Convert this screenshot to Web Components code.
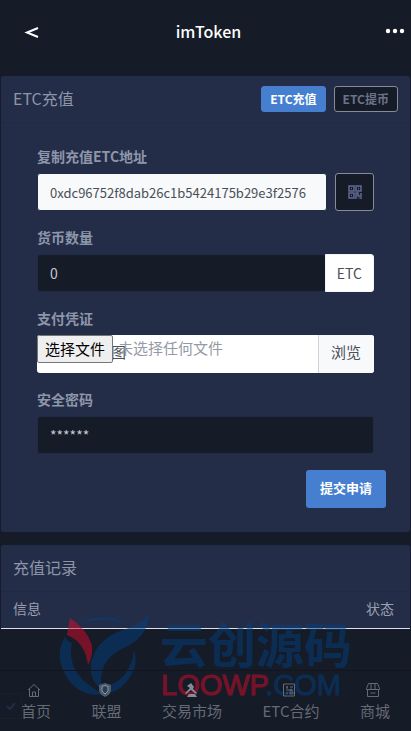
<!DOCTYPE html>
<html lang="zh-CN">
<head>
<meta charset="utf-8">
<meta name="viewport" content="width=device-width, initial-scale=1">
<title>imToken</title>
<style>
html { background: #151b27; }
body { margin: 0; color: #9aa0b1; font: 14px/20px "Noto Sans CJK SC", sans-serif; }
</style>
</head>
<body>
<wallet-page></wallet-page>
<script>
const base = `*{box-sizing:border-box}button,input{font:inherit;margin:0}button{cursor:pointer}svg{display:block;fill:none;stroke:currentColor}`;
function define(name, css, html, setup) {
  customElements.define(name, class extends HTMLElement {
    constructor() {
      super();
      const root = this.attachShadow({ mode: 'open' });
      root.innerHTML = `<style>${base}${css}</style>${typeof html === 'function' ? html(this) : html}`;
      if (setup) setup(root);
    }
  });
}

define('app-header', `
  :host{display:grid;grid-template-columns:1fr auto 1fr;align-items:center;height:76px;padding:0 6px 14px 12px;color:#fff}
  h1{margin:0;font-size:16px;line-height:24px;font-weight:500}
  button{border:0;padding:0 12px;background:none;color:inherit;display:flex}
  .more{justify-self:end;padding:0}
`, `<button aria-label="返回"><svg width="16" height="16" viewBox="0 0 16 16" stroke-width="2"><path d="M14 5 3 9.500l11 4.500"/></svg></button>
<h1>imToken</h1>
<button class="more" aria-label="更多"><svg width="20" height="6" viewBox="0 0 20 6" style="fill:currentColor;stroke:none"><circle cx="3" cy="3" r="2.200"/><circle cx="10" cy="3" r="2.200"/><circle cx="17" cy="3" r="2.200"/></svg></button>`);

define('panel-card', `
  :host{display:block;margin:0 1px;background:#242d48;border-radius:3px;box-shadow:0 0 2px #1d2540}
  header{display:flex;justify-content:space-between;align-items:center;height:47px;padding:0 12px;border-bottom:1px solid #222a43}
  h2{margin:0;padding-bottom:2px;font-size:16px;line-height:24px;font-weight:400;color:#8d95a9}
`, `<header><h2><slot name="title"></slot></h2><slot name="actions"></slot></header><slot></slot>`);

define('mode-switch', `
  :host{display:flex;gap:8px}
  button{height:26px;padding:0 8px;border:1px solid #858b98;border-radius:3px;background:#151b27;color:#6c7389;font-size:12px;line-height:18px;font-weight:700}
  .on{background:#467fcf;border-color:#467fcf;color:#fff}
`, `<button class="on">ETC充值</button><button>ETC提币</button>`);

define('form-field', `
  :host{display:block;margin-bottom:16px}
  label{display:block;margin-bottom:7px;font-weight:700;color:#8e96a9}
  .row{display:flex}
  input{flex:1;min-width:0;width:100%;height:38px;padding:0 12px;border:1px solid #222b45;border-radius:3px;background:#151b27;color:#c5c9d2;outline:0}
  .light{background:#f8f9fb;color:#495057;font-size:13px}
  ::slotted([slot=joined]){margin-left:-1px}
  ::slotted([slot=side]){margin-left:8px}
`, el => `<label for="f">${el.getAttribute('label')}</label><div class="row"><input id="f" type="text" class="${el.hasAttribute('light') ? 'light' : ''}" value="${el.getAttribute('value')}"${el.hasAttribute('light') ? ' readonly' : ''}><slot name="joined"></slot><slot name="side"></slot></div>`);

define('unit-tag', `
  :host{display:flex;align-items:center;box-sizing:border-box;height:38px;padding:0 11px;background:#fff;color:#495057;border-radius:0 3px 3px 0;border:1px solid #f3f4f7}
`, `<slot></slot>`);

define('qr-button', `
  :host{display:block}
  button{display:grid;place-items:center;width:39px;height:38px;padding:0;border:1px solid #858b98;border-radius:3px;background:#151b27;color:#626b94}
`, `<button aria-label="二维码"><svg width="14" height="14" viewBox="0 0 14 14" stroke-width="1.500"><path d="M1 1h5v5H1zM8 1h5v5H8zM1 8h5v5H1zM8 14V8h2v3h3V8M10.500 13h1M13 12v2"/><path d="M3 3.500h1M10 3.500h1M3 10.500h1"/></svg></button>`);

define('file-field', `
  :host{display:block;margin-bottom:16px}
  label.name{display:block;margin-bottom:7px;font-weight:700;color:#8e96a9}
  .box{position:relative;display:flex;justify-content:space-between;height:38px;background:#fff;border-radius:3px;overflow:hidden;color:#495057;font-size:15px}
  .hint{padding:7px 0 0 74px}
  .browse{padding:7px 13px 0 12px;background:#f8f9fa;border-left:1px solid #cfd3dc}
  .native{position:absolute;left:0;top:0;display:flex;gap:5px;color:#9499a5}
  .native span{padding-top:3px}
  .native button{height:28px;padding:0 7px;border:1px solid #767676;border-radius:2px;background:#efefef;color:#000}
  input{position:absolute;inset:0;width:100%;height:100%;opacity:0}
`, `<label class="name" for="file">支付凭证</label><div class="box"><span class="hint">图</span><span class="browse">浏览</span><div class="native"><button type="button">选择文件</button><span>未选择任何文件</span></div><input id="file" type="file"></div>`,
  root => root.querySelector('button').addEventListener('click', () => root.querySelector('input').click()));

define('submit-button', `
  :host{display:flex;justify-content:flex-end}
  button{height:38px;padding:0 14px 3px;border:0;border-radius:3px;background:#467fcf;color:#fff;font-size:13px;font-weight:700}
`, `<button type="submit"><slot></slot></button>`);

define('deposit-form', `
  :host{display:block;padding:23px 24px 24px}
  .fields{padding:0 12px}
`, `<div class="fields">
<form-field label="复制充值ETC地址" value="0xdc96752f8dab26c1b5424175b29e3f2576" light><qr-button slot="side"></qr-button></form-field>
<form-field label="货币数量" value="0"><unit-tag slot="joined">ETC</unit-tag></form-field>
<file-field></file-field>
<form-field label="安全密码" value="******"></form-field>
</div><submit-button>提交申请</submit-button>`);

define('record-table', `
  :host{display:block}
  table{width:100%;border-collapse:collapse}
  th{height:36px;padding:0 12px 3px;text-align:left;font-weight:400;color:#9aa0b1;border-bottom:1px solid #dee2e6}
  th:last-child{text-align:right;padding-right:16px}
`, `<table><thead><tr><th>信息</th><th>状态</th></tr></thead></table>`);

define('brand-mark', `
  :host{position:absolute;left:58px;bottom:31px;display:flex;gap:10px;opacity:.5;pointer-events:none;color:#044080}
  .words{width:192px}
  .cn{font-size:48px;line-height:54px;font-weight:700}
  .en{margin-top:2px;padding-left:1px;font:29px/29px "Liberation Sans",sans-serif;white-space:nowrap;-webkit-text-stroke:1px currentColor}
  .en span{color:#d80d2c}
  svg{stroke:none;flex:none}
`, `<svg width="92" height="84" viewBox="0 0 92 84"><g fill="#044080"><path d="M22 8Q47-5 70 10Q47 1 22 8Z"/><path d="M7 22Q10 27 14 28Q9 50 26 66Q34 73 45 79Q24 83 10 64Q-5 41 7 22Z"/><path d="M90 0Q91 19 70 31Q46 41 44 58Q41 65 46 76Q31 67 33 48Q39 23 65 15Q82 10 90 0Z"/><path d="M76 34Q81 49 72 62Q64 75 51 78Q44 76 45 71Q59 70 67 59Q75 48 76 34Z"/></g><path fill="#d80d2c" d="M12 3Q28 13 34 30Q35 42 30 50Q27 27 9 20Z"/></svg>
<div class="words"><div class="cn">云创源码</div><div class="en"><span>LOOWP</span>.COM</div></div>`);

define('nav-item', `
  :host{display:block}
  a{display:flex;flex-direction:column;align-items:center;gap:2px;color:#646a76;text-decoration:none;font-size:15px;line-height:24px}
  svg{margin-right:4px}
`, el => `<a href="#${el.getAttribute('icon')}"><svg width="14" height="14" viewBox="0 0 14 14" stroke-width="1">${{
  home: '<path d="M1 7l6-5.500L13 7M2.500 6v7.500h9V6M5.500 13V9h3v4"/>',
  shield: '<path stroke="none" fill="#4c5b6a" d="M7 0l6 2v5.500Q12 12 7 14 2 12 1 7.500V2z"/><path stroke="#8d96a4" fill="#263f58" d="M7 2.500l3 1v4.500L7 11 4 8V3.500z"/>',
  market: '<path fill="#858b98" stroke="none" d="M4 3l4-3 3 4-1 2 4 4-1 1-5-4-5 4-1-1 5-5zM6 11h6l2 3H4z"/>',
  contract: '<path d="M1.500 1h11v12h-11zM4 4h2M8 4h3M4 7h7M4 10h2M8 9h3v2H8z"/><path d="M5 3v3M9 6v2"/>',
  shop: '<path d="M2.500 .5h9l2 5v1H.500v-1zM1.500 7v6.500h11V7M5 1v5M9 1v5M4.500 10h5"/>'
}[el.getAttribute('icon')]}</svg><span>${el.getAttribute('label')}</span></a>`);

define('bottom-nav', `
  :host{position:relative;display:block;border-top:1px solid #10151f}
  nav{display:flex;justify-content:space-between;padding:12px 21px 8px}
  .tick{position:absolute;left:0;top:22px;width:22px;height:26px;display:grid;place-items:center;border:1px solid #19202d;border-left:0;color:#202d42}
`, `<span class="tick"><svg width="10" height="10" viewBox="0 0 10 10" stroke-width="2"><path d="M1 5l3 3 5-6"/></svg></span><nav><nav-item icon="home" label="首页"></nav-item><nav-item icon="shield" label="联盟"></nav-item><nav-item icon="market" label="交易市场"></nav-item><nav-item icon="contract" label="ETC合约"></nav-item><nav-item icon="shop" label="商城"></nav-item></nav>`);

define('wallet-page', `
  :host{position:relative;display:flex;flex-direction:column;min-height:100vh}
  main{display:flex;flex-direction:column;gap:13px;flex:1}
`, `<app-header></app-header><main>
<panel-card><span slot="title">ETC充值</span><mode-switch slot="actions"></mode-switch><deposit-form></deposit-form></panel-card>
<panel-card><span slot="title">充值记录</span><record-table></record-table></panel-card>
</main><brand-mark></brand-mark><bottom-nav></bottom-nav>`);
</script>
</body>
</html>
